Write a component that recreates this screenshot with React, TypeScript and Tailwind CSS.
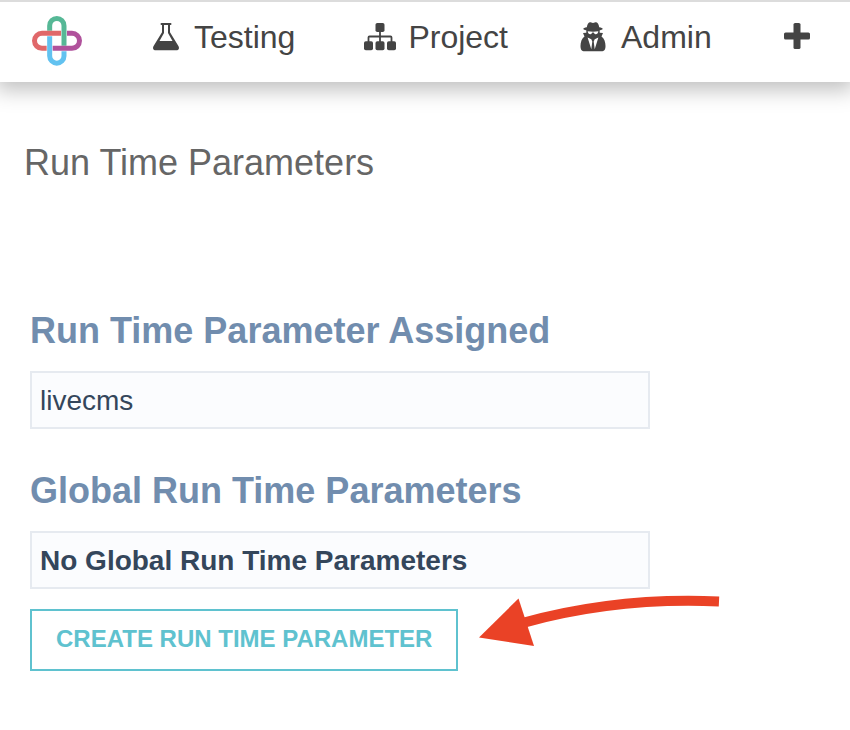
import type { ReactNode } from "react";

function Logo() {
  return (
    <svg viewBox="0 0 150 150" className="size-[50px]" fill="none" strokeWidth="15" aria-hidden="true">
      <path d="M53 44V29a21.500 21.500 0 0 1 43 0V89" stroke="#56b896" />
      <path d="M87 52H30a22.500 22.500 0 0 0 0 45H44" stroke="#e0686a" />
      <path d="M53 61V120a21.500 21.500 0 0 0 43 0V106" stroke="#62c2f0" />
      <path d="M105 52H120a22.500 22.500 0 0 1 0 45H62" stroke="#b0529c" />
    </svg>
  );
}

function FlaskIcon() {
  return (
    <svg viewBox="0 0 26 28" className="h-7 w-[26px]" fill="currentColor" aria-hidden="true">
      <path
        fillRule="evenodd"
        d="M8.500 0h9a1 1 0 0 1 0 2H17v7.300l8.400 13.800c1.300 2.300.3 4.200-2.400 4.200H3C.3 27.300-.7 25.400.6 23.100L9 9.300V2h-.5a1 1 0 0 1 0-2ZM11 2v7.900L6.500 18h13L15 9.900V2Z"
      />
    </svg>
  );
}

function SitemapIcon() {
  return (
    <svg viewBox="0 0 32 28" className="h-7 w-8" fill="currentColor" aria-hidden="true">
      <rect x="11.500" y="0" width="9" height="9" rx="1.800" />
      <rect x="0" y="18.300" width="9" height="9" rx="1.800" />
      <rect x="11.500" y="18.300" width="9" height="9" rx="1.800" />
      <rect x="23" y="18.300" width="9" height="9" rx="1.800" />
      <path
        d="M16 8v11M4.500 19v-4.500a1 1 0 0 1 1-1h21a1 1 0 0 1 1 1V19"
        fill="none"
        stroke="currentColor"
        strokeWidth="1.800"
      />
    </svg>
  );
}

function SpyIcon() {
  return (
    <svg viewBox="0 0 26 30" className="h-[30px] w-[26px]" fill="currentColor" aria-hidden="true">
      <path d="M6.800 5.200C7.300 2.500 8.300.2 9.800.2c1 0 2 .7 3.200.7s2.200-.7 3.200-.7c1.500 0 2.500 2.300 3 5 2.100.4 3.600 1 3.600 1.600C22.800 8 18.200 9 13 9S3.200 8 3.200 6.800c0-.6 1.500-1.200 3.600-1.600Z" />
      <path
        fillRule="evenodd"
        d="M6.300 7.500h13.400v3.200l3.300.4-1.500 3.400c2.800 1.800 4 5.800 4 9.500 0 3.600-1 5.300-4.200 5.300H4.700c-3.200 0-4.200-1.700-4.200-5.300 0-3.700 1.200-7.700 4-9.500L3 11.100l3.300-.4ZM7.700 9.300c.2 2.200 1.300 3 2.700 2.900 1.100-.1 1.600-.9 1.900-1.700h1.400c.3.800.8 1.600 1.900 1.700 1.400.1 2.500-.7 2.700-2.900-3.200.6-7.400.6-10.600 0ZM7.600 15.600l3.700 11.600 1-7.600-1-2.300Zm10.800 0-3.700 1.700-1 2.300 1 7.600Z"
      />
    </svg>
  );
}

function PlusIcon() {
  return (
    <svg viewBox="0 0 26 28" className="h-7 w-[26px]" fill="currentColor" aria-hidden="true">
      <rect x="9.500" y="0" width="7" height="26" rx="1.600" />
      <rect x="0" y="9.500" width="26" height="7" rx="1.600" />
    </svg>
  );
}

function NavLink({ icon, children }: { icon: ReactNode; children: ReactNode }) {
  return (
    <a href="#" className="flex items-center gap-2 text-[32px] leading-9">
      <span className="flex w-10 justify-center">{icon}</span>
      {children}
    </a>
  );
}

function ParameterField({
  id,
  label,
  value,
  strong = false,
}: {
  id: string;
  label: string;
  value: string;
  strong?: boolean;
}) {
  return (
    <section>
      <h2 className="mb-5 text-[36px] leading-10 font-bold text-[#718dae]">
        <label htmlFor={id}>{label}</label>
      </h2>
      <input
        id={id}
        readOnly
        value={value}
        className={`h-[58px] w-full border-2 border-[#e6eaf0] bg-[#fbfcfe] px-2 pt-0.5 text-[28px] text-[#34465b] ${
          strong ? "font-bold" : "font-normal"
        }`}
      />
    </section>
  );
}

export default function App() {
  return (
    <div className="min-h-screen overflow-x-hidden bg-white font-['Liberation_Sans',Arial,sans-serif]">
      <header className="flex items-start gap-16 border-t-2 border-[#dcdcdc] bg-white px-8 pt-[14px] pb-4 text-[#444444] shadow-[0_4px_20px_4px_rgba(0,0,0,0.25)]">
        <a href="#" aria-label="Home" className="shrink-0">
          <Logo />
        </a>
        <nav className="flex items-center gap-[65px] pt-[3px]">
          <NavLink icon={<FlaskIcon />}>Testing</NavLink>
          <NavLink icon={<SitemapIcon />}>Project</NavLink>
          <NavLink icon={<SpyIcon />}>Admin</NavLink>
          <button type="button" aria-label="Add" className="flex w-10 justify-center">
            <PlusIcon />
          </button>
        </nav>
      </header>

      <main className="pt-14 pb-14">
        <h1 className="px-6 text-[36px] leading-[50px] text-[#666666]">Run Time Parameters</h1>

        <div className="mt-[123px] px-[30px]">
          <div className="flex max-w-[620px] flex-col gap-[42px]">
            <ParameterField id="assigned" label="Run Time Parameter Assigned" value="livecms" />
            <ParameterField
              id="global"
              label="Global Run Time Parameters"
              value="No Global Run Time Parameters"
              strong
            />
          </div>

          <div className="relative mt-5 w-fit">
            <button
              type="button"
              className="border-2 border-[#5fc2cf] bg-white px-6 pt-3 pb-[14px] text-[24px] leading-8 font-bold text-[#5fc2cf]"
            >
              CREATE RUN TIME PARAMETER
            </button>
            <svg
              viewBox="0 0 244 56"
              className="absolute -top-4 left-full ml-5 h-14 w-[244px]"
              aria-hidden="true"
            >
              <path d="M1 44.500 40.500 5.500 56 53Z" fill="#ea4226" />
              <path d="M46 29.600C110 12 175 5.500 241 8.500" fill="none" stroke="#ea4226" strokeWidth="10" />
            </svg>
          </div>
        </div>
      </main>
    </div>
  );
}
